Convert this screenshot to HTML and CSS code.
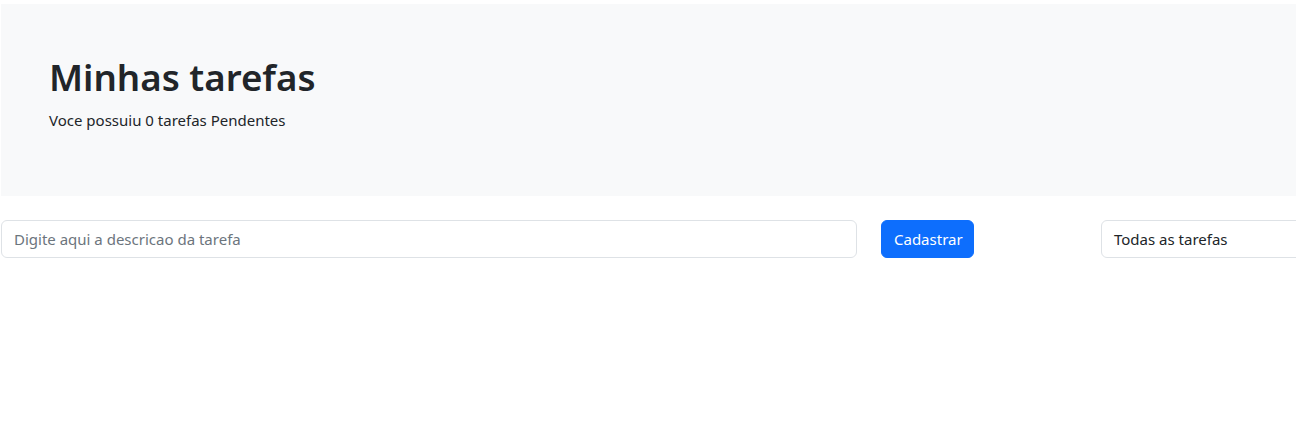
FILE: index.html
```html
<!DOCTYPE html>
<html lang="pt-BR">
<head>
<meta charset="utf-8">
<title>Minhas tarefas</title>
<link rel="stylesheet" href="styles.css">
</head>
<body>
<div class="page">
  <header class="jumbo">
    <h1 class="title">Minhas tarefas</h1>
    <p class="lead">Voce possuiu 0 tarefas Pendentes</p>
  </header>
  <form class="row">
    <input class="field desc" type="text" placeholder="Digite aqui a descricao da tarefa">
    <button class="btn" type="button">Cadastrar</button>
    <div class="spacer"></div>
    <div class="field select">Todas as tarefas</div>
  </form>
</div>
</body>
</html>
```
FILE: styles.css
```css
html, body {
  margin: 0;
  padding: 0;
  background: #fff;
  overflow: hidden;
}
.page {
  padding: 4px 0 0 1px;
  width: 1320px;
  font-family: "Noto Sans", "Open Sans", sans-serif;
  color: #212529;
  font-size: 16px;
  line-height: 1.5;
}
.jumbo {
  background: #f8f9fa;
  padding: 48px;
  margin-bottom: 24px;
}
.title {
  margin: 0 0 8px;
  font-size: 36.7px;
  line-height: 48px;
  font-weight: 600;
  padding-top: 1px;
  height: 47px;
}
.lead {
  margin: 0 0 16px;
  font-size: 15px;
  line-height: 24px;
}
.row {
  display: flex;
  align-items: stretch;
  margin: 0;
}
.field {
  box-sizing: border-box;
  height: 38px;
  border: 1px solid #dee2e6;
  border-radius: 6px;
  background: #fff;
  font: inherit;
  font-size: 15px;
  color: #212529;
  padding: 6px 12px;
}
.desc {
  width: 856px;
  outline: none;
}
.desc::placeholder {
  color: #6c757d;
}
.btn {
  margin-left: 24px;
  box-sizing: border-box;
  width: 93px;
  height: 38px;
  border: 1px solid #0d6efd;
  border-radius: 6px;
  background: #0d6efd;
  color: #fff;
  font: inherit;
  font-size: 15px;
  padding: 6px 12px;
}
.spacer {
  width: 127px;
}
.select {
  width: 220px;
  display: flex;
  align-items: center;
}
```
